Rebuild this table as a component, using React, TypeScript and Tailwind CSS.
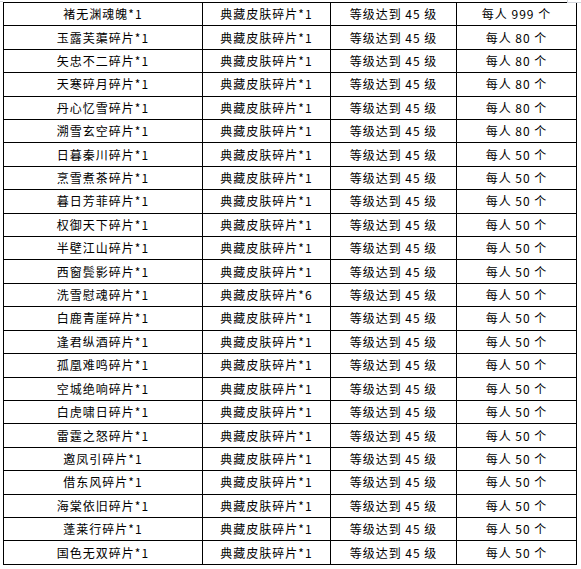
const rows: Array<[string, string, string]> = [
  ["褚无渊魂魄*1", "典藏皮肤碎片*1", "每人 999 个"],
  ["玉露芙蕖碎片*1", "典藏皮肤碎片*1", "每人 80 个"],
  ["矢忠不二碎片*1", "典藏皮肤碎片*1", "每人 80 个"],
  ["天寒碎月碎片*1", "典藏皮肤碎片*1", "每人 80 个"],
  ["丹心忆雪碎片*1", "典藏皮肤碎片*1", "每人 80 个"],
  ["溯雪玄空碎片*1", "典藏皮肤碎片*1", "每人 80 个"],
  ["日暮秦川碎片*1", "典藏皮肤碎片*1", "每人 50 个"],
  ["烹雪煮茶碎片*1", "典藏皮肤碎片*1", "每人 50 个"],
  ["暮日芳菲碎片*1", "典藏皮肤碎片*1", "每人 50 个"],
  ["权御天下碎片*1", "典藏皮肤碎片*1", "每人 50 个"],
  ["半壁江山碎片*1", "典藏皮肤碎片*1", "每人 50 个"],
  ["西窗鬓影碎片*1", "典藏皮肤碎片*1", "每人 50 个"],
  ["洗雪慰魂碎片*1", "典藏皮肤碎片*6", "每人 50 个"],
  ["白鹿青崖碎片*1", "典藏皮肤碎片*1", "每人 50 个"],
  ["逢君纵酒碎片*1", "典藏皮肤碎片*1", "每人 50 个"],
  ["孤凰难鸣碎片*1", "典藏皮肤碎片*1", "每人 50 个"],
  ["空城绝响碎片*1", "典藏皮肤碎片*1", "每人 50 个"],
  ["白虎啸日碎片*1", "典藏皮肤碎片*1", "每人 50 个"],
  ["雷霆之怒碎片*1", "典藏皮肤碎片*1", "每人 50 个"],
  ["邀凤引碎片*1", "典藏皮肤碎片*1", "每人 50 个"],
  ["借东风碎片*1", "典藏皮肤碎片*1", "每人 50 个"],
  ["海棠依旧碎片*1", "典藏皮肤碎片*1", "每人 50 个"],
  ["蓬莱行碎片*1", "典藏皮肤碎片*1", "每人 50 个"],
  ["国色无双碎片*1", "典藏皮肤碎片*1", "每人 50 个"],
];

const cell =
  "flex items-center justify-center border-r border-b border-black whitespace-nowrap";

export default function App() {
  return (
    <div
      className="relative w-[581px] h-[569px] bg-white pt-[2px] pl-[3px] text-black text-[12px] tracking-[1px] leading-none"
      style={{ fontFamily: '"Noto Sans CJK SC", "Noto Sans", sans-serif' }}
    >
      {/* faint screenshot marks at the top corners */}
      <div className="absolute left-0 top-[1px] w-[3px] h-px bg-gray-300" />
      <div className="absolute left-[567px] top-0 w-px h-[2px] bg-gray-300" />
      <div className="absolute left-[567px] top-[2px] w-[14px] h-px bg-gray-300" />

      <div className="grid grid-cols-[199px_128px_126px_120px] auto-rows-[23.4167px] w-[574px] border-l border-t border-black">
        {rows.map(([name, item, limit], i) => (
          <div key={i} className="contents">
            <div className={cell}>{name}</div>
            <div className={cell}>{item}</div>
            <div className={cell}>等级达到 45 级</div>
            <div className={cell}>{limit}</div>
          </div>
        ))}
      </div>
    </div>
  );
}
